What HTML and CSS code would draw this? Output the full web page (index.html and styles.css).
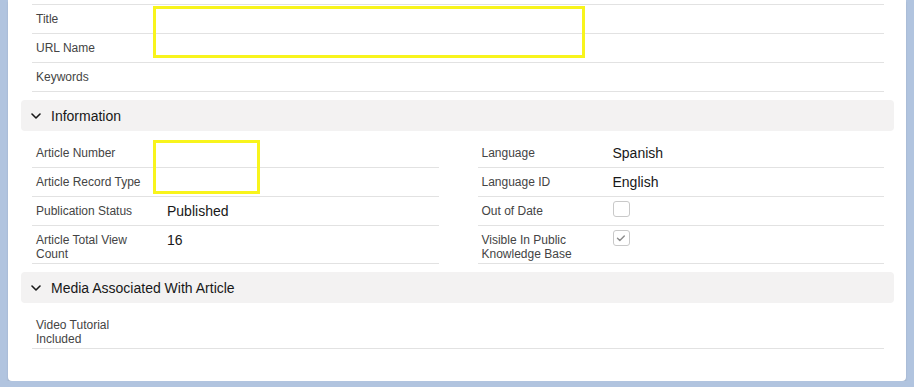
FILE: index.html
```html
<!DOCTYPE html>
<html lang="en">
<head>
    <meta charset="UTF-8">
    <meta name="viewport" content="width=device-width, initial-scale=1.0">
    <title>Article Details</title>
    <link rel="stylesheet" href="styles.css">
</head>
<body>
    <div class="card">
        <div class="fields">
            <div class="field first">
                <span class="label">Title</span>
                <span class="value"></span>
            </div>
            <div class="field">
                <span class="label">URL Name</span>
                <span class="value"></span>
            </div>
            <div class="field">
                <span class="label">Keywords</span>
                <span class="value"></span>
            </div>
        </div>

        <div class="section-title">
            <svg class="chevron" viewBox="0 0 10 10" width="10" height="10">
                <path d="M1 3l4 4 4-4" fill="none" stroke="#181818" stroke-width="1.6" stroke-linecap="round" stroke-linejoin="round"/>
            </svg>
            <span>Information</span>
        </div>

        <div class="fields two-cols">
            <div class="field">
                <span class="label">Article Number</span>
                <span class="value"></span>
            </div>
            <div class="field">
                <span class="label">Language</span>
                <span class="value">Spanish</span>
            </div>
            <div class="field">
                <span class="label">Article Record Type</span>
                <span class="value"></span>
            </div>
            <div class="field">
                <span class="label">Language ID</span>
                <span class="value">English</span>
            </div>
            <div class="field">
                <span class="label">Publication Status</span>
                <span class="value">Published</span>
            </div>
            <div class="field">
                <span class="label">Out of Date</span>
                <span class="value"><span class="checkbox"></span></span>
            </div>
            <div class="field">
                <span class="label">Article Total View Count</span>
                <span class="value">16</span>
            </div>
            <div class="field">
                <span class="label">Visible In Public Knowledge Base</span>
                <span class="value">
                    <span class="checkbox">
                        <svg viewBox="0 0 16 16" width="16" height="16">
                            <path d="M4.5 8.3l2.3 2.2 4.5-4.6" fill="none" stroke="#8c8c8c" stroke-width="1.4" stroke-linecap="round" stroke-linejoin="round"/>
                        </svg>
                    </span>
                </span>
            </div>
        </div>

        <div class="section-title">
            <svg class="chevron" viewBox="0 0 10 10" width="10" height="10">
                <path d="M1 3l4 4 4-4" fill="none" stroke="#181818" stroke-width="1.6" stroke-linecap="round" stroke-linejoin="round"/>
            </svg>
            <span>Media Associated With Article</span>
        </div>

        <div class="fields">
            <div class="field">
                <span class="label">Video Tutorial Included</span>
                <span class="value"></span>
            </div>
        </div>

        <!-- surlignages jaunes par-dessus les valeurs masquées -->
        <div class="highlight highlight-title"></div>
        <div class="highlight highlight-number"></div>
    </div>
</body>
</html>
```

FILE: styles.css
```css
* {
    margin: 0;
    padding: 0;
    box-sizing: border-box;
}

body {
    font-family: "Liberation Sans", Arial, sans-serif;
    background-color: #b1c4df;
    color: #181818;
    padding: 0 8px;
}

.card {
    position: relative;
    background-color: #fff;
    border-radius: 0 0 4px 4px;
    box-shadow: 0 2px 2px rgba(0, 0, 0, 0.12);
    padding: 4px 12px 24px 13px;
}

.fields {
    padding: 0 10px 0 11px;
    margin-bottom: 8px;
}

.fields.two-cols {
    display: grid;
    grid-template-columns: 1fr 1fr;
    column-gap: 39px;
    margin-top: 8px;
}

.field {
    display: flex;
    align-items: flex-start;
    min-height: 29px;
    padding: 5px 0 2px 4px;
    border-bottom: 1px solid #e2e2e2;
}

.fields .first {
    min-height: 30px;
    border-top: 1px solid #e2e2e2;
}

.label {
    width: 131px;
    flex-shrink: 0;
    padding-top: 2px;
    padding-right: 10px;
    font-size: 12px;
    line-height: 14px;
    color: #444;
}

.value {
    font-size: 14px;
    line-height: 19px;
    color: #181818;
}

.checkbox {
    display: block;
    width: 17px;
    height: 16px;
    margin-top: -1px;
    border: 1px solid #c9c9c9;
    border-radius: 3px;
    background-color: #fff;
}

.checkbox svg {
    display: block;
    margin: -1px 0 0 -1px;
}

.section-title {
    display: flex;
    align-items: center;
    height: 31px;
    padding-left: 10px;
    background-color: #f3f2f2;
    border-radius: 4px;
    font-size: 14px;
    color: #181818;
}

.chevron {
    margin-right: 10px;
}

.section-title + .fields {
    margin-top: 8px;
}

.highlight {
    position: absolute;
    border: 3px solid #f8f41c;
}

.highlight-title {
    left: 145px;
    top: 6px;
    width: 432px;
    height: 52px;
}

.highlight-number {
    left: 145px;
    top: 140px;
    width: 107px;
    height: 54px;
}
```
